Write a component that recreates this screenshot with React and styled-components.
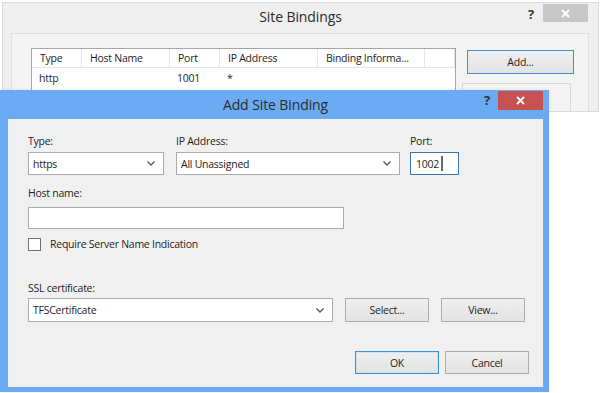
import React from 'react';
import styled, { createGlobalStyle } from 'styled-components';

const GlobalStyle = createGlobalStyle`
  html, body {
    margin: 0;
    padding: 0;
    background: #ffffff;
    font-family: "Open Sans", "Noto Sans", "Liberation Sans", sans-serif;
    font-size: 10.5px;
    letter-spacing: -0.25px;
    color: #1e1e1e;
  }
`;

const Desktop = styled.div`
  position: relative;
  width: 600px;
  height: 393px;
  overflow: hidden;
`;

/* ---------- background window: Site Bindings ---------- */

const BackWindow = styled.div`
  position: absolute;
  left: 2px;
  top: 2px;
  width: 597px;
  height: 110px;
  box-sizing: border-box;
  background: #efefef;
  border: 1px solid #dadada;
  overflow: hidden;
  display: flex;
  flex-direction: column;
`;

const TitleBar = styled.div`
  height: ${(p) => p.$height}px;
  flex: none;
  display: grid;
  grid-template-columns: 1fr auto 1fr;
  align-items: start;
`;

const Title = styled.div`
  grid-column: 2;
  font-size: 14px;
  letter-spacing: -0.1px;
  line-height: ${(p) => p.$line}px;
  color: #2b2b2b;
  white-space: nowrap;
`;

const Controls = styled.div`
  grid-column: 3;
  justify-self: end;
  display: flex;
  align-items: flex-start;
  gap: ${(p) => p.$gap}px;
  padding-right: ${(p) => p.$right}px;
  padding-top: ${(p) => p.$top}px;
`;

const Help = styled.span`
  font-weight: 700;
  font-size: 13px;
  line-height: ${(p) => p.$line}px;
  color: ${(p) => p.$color};
`;

const CloseBox = styled.div`
  width: 45px;
  height: ${(p) => p.$h}px;
  background: ${(p) => p.$bg};
  display: flex;
  align-items: center;
  justify-content: center;
`;

const BackBody = styled.div`
  flex: 1;
  padding: 0 0 0 8px;
`;

const Panel = styled.div`
  width: 578px;
  height: 100px;
  box-sizing: border-box;
  background: #f4f4f4;
  border: 1px solid #e0e0e0;
  padding: 14px 0 0 19px;
  display: flex;
  align-items: flex-start;
`;

const Table = styled.div`
  width: 425px;
  height: 80px;
  box-sizing: border-box;
  border: 1px solid #a5a5a5;
  background: #ffffff;
  flex: none;
`;

const TableRow = styled.div`
  display: grid;
  grid-template-columns: 50px 88px 50px 98px 107px 1fr;
  height: ${(p) => (p.$header ? 18 : 20)}px;
  border-bottom: ${(p) => (p.$header ? '1px solid #e5e5e5' : 'none')};
`;

const Cell = styled.div`
  padding-left: ${(p) => (p.$header ? 8 : 7)}px;
  line-height: ${(p) => (p.$header ? 18 : 21)}px;
  border-right: ${(p) => (p.$header ? '1px solid #e5e5e5' : 'none')};
  white-space: nowrap;
  overflow: hidden;
`;

const SideButtons = styled.div`
  display: flex;
  flex-direction: column;
  margin-left: 11px;
  padding-top: 2px;
`;

const Button = styled.button`
  width: ${(p) => p.$w || 84}px;
  height: ${(p) => p.$h || 24}px;
  box-sizing: border-box;
  margin: 0;
  padding: 0;
  font-family: inherit;
  font-size: 10.5px;
  letter-spacing: -0.25px;
  color: #1e1e1e;
  background: ${(p) => (p.$disabled ? '#f4f4f4' : 'linear-gradient(#efefef, #e3e3e3)')};
  border: 1px solid ${(p) => (p.$accent ? '#3c8fd8' : p.$disabled ? '#d9d9d9' : '#acacac')};
  box-shadow: ${(p) => (p.$soft ? 'inset 0 0 0 1px #cfe3f7' : 'none')};
  border-radius: 0;
`;

const GhostButton = styled(Button)`
  margin: 9px 0 0 -5px;
`;

/* ---------- foreground dialog: Add Site Binding ---------- */

const Dialog = styled.div`
  position: absolute;
  left: 0;
  top: 90px;
  width: 549px;
  height: 302px;
  box-sizing: border-box;
  background: #6aabf4;
  padding: 0 6px 5px 8px;
  display: flex;
  flex-direction: column;
  box-shadow: 0 0 3px rgba(0, 0, 0, 0.1);
`;

const Content = styled.div`
  flex: 1;
  background: #f0f0f0;
  padding: 15px 0 0 20px;
  display: flex;
  flex-direction: column;
`;

const TopRow = styled.div`
  display: grid;
  grid-template-columns: 136px 224px 49px;
  column-gap: 12px;
  & > :nth-child(3) {
    margin-left: -2px;
  }
`;

const Field = styled.div`
  display: flex;
  flex-direction: column;
`;

const Label = styled.label`
  line-height: 15px;
  height: 15px;
  margin-bottom: ${(p) => p.$gap ?? 3}px;
  color: #1e1e1e;
`;

const Combo = styled.div`
  width: ${(p) => p.$w}px;
  height: ${(p) => p.$h || 24}px;
  box-sizing: border-box;
  background: #ffffff;
  border: 1px solid #acacac;
  display: flex;
  align-items: center;
  justify-content: space-between;
  padding: 0 8px 0 4px;
`;

const TextBox = styled.div`
  width: ${(p) => p.$w}px;
  height: ${(p) => p.$h || 22}px;
  box-sizing: border-box;
  background: #ffffff;
  border: 1px solid ${(p) => (p.$focus ? '#3a79b0' : '#acacac')};
  display: flex;
  align-items: center;
  padding-left: 5px;
`;

const Caret = styled.span`
  display: inline-block;
  width: 2px;
  height: 15px;
  margin-left: 2px;
  background: #6a6a6a;
`;

const HostSection = styled.div`
  margin-top: 11px;
`;

const CheckRow = styled.div`
  display: flex;
  align-items: center;
  gap: 9px;
  margin-top: 8px;
`;

const CheckBox = styled.span`
  width: 13px;
  height: 13px;
  box-sizing: border-box;
  border: 1px solid #707070;
  background: #ffffff;
`;

const SslSection = styled.div`
  margin-top: 30px;
`;

const SslRow = styled.div`
  display: flex;
  align-items: center;
  gap: 12px;
`;

const Footer = styled.div`
  display: flex;
  justify-content: flex-end;
  gap: 6px;
  margin-top: 29px;
  padding-right: 14px;
`;

const Chevron = () => (
  <svg width="8" height="5" viewBox="0 0 8 5">
    <path d="M0.5 0.5 L4 4 L7.5 0.5" fill="none" stroke="#555" strokeWidth="1.3" />
  </svg>
);

const CloseGlyph = () => (
  <svg width="9" height="9" viewBox="0 0 9 9">
    <path d="M1 1 L8 8 M8 1 L1 8" stroke="#ffffff" strokeWidth="1.8" />
  </svg>
);

const columns = ['Type', 'Host Name', 'Port', 'IP Address', 'Binding Informa...', ''];
const rows = [['http', '', '1001', '*', '', '']];

export default function App() {
  return (
    <Desktop>
      <GlobalStyle />

      <BackWindow>
        <TitleBar $height={30}>
          <Title $line={28}>Site Bindings</Title>
          <Controls $gap={9} $right={10} $top={1}>
            <Help $line={20} $color="#3a3a3a">?</Help>
            <CloseBox $bg="#c7c7c7" $h={18}>
              <CloseGlyph />
            </CloseBox>
          </Controls>
        </TitleBar>
        <BackBody>
          <Panel>
            <Table>
              <TableRow $header>
                {columns.map((c, i) => (
                  <Cell $header key={i}>{c}</Cell>
                ))}
              </TableRow>
              {rows.map((r, i) => (
                <TableRow key={i}>
                  {r.map((c, j) => (
                    <Cell key={j}>{c}</Cell>
                  ))}
                </TableRow>
              ))}
            </Table>
            <SideButtons>
              <Button $w={107} $accent>Add...</Button>
              <GhostButton $w={109} $h={30} $disabled />
            </SideButtons>
          </Panel>
        </BackBody>
      </BackWindow>

      <Dialog>
        <TitleBar $height={29}>
          <Title $line={29}>Add Site Binding</Title>
          <Controls $gap={8} $right={0} $top={1}>
            <Help $line={19} $color="#333">?</Help>
            <CloseBox $bg="#c75050" $h={19}>
              <CloseGlyph />
            </CloseBox>
          </Controls>
        </TitleBar>
        <Content>
          <TopRow>
            <Field>
              <Label>Type:</Label>
              <Combo $w={136} $h={23}>
                <span>https</span>
                <Chevron />
              </Combo>
            </Field>
            <Field>
              <Label>IP Address:</Label>
              <Combo $w={224} $h={23}>
                <span>All Unassigned</span>
                <Chevron />
              </Combo>
            </Field>
            <Field>
              <Label>Port:</Label>
              <TextBox $w={49} $h={23} $focus>
                1002<Caret />
              </TextBox>
            </Field>
          </TopRow>

          <HostSection>
            <Field>
              <Label $gap={6}>Host name:</Label>
              <TextBox $w={316} $h={22} />
            </Field>
            <CheckRow>
              <CheckBox />
              <span>Require Server Name Indication</span>
            </CheckRow>
          </HostSection>

          <SslSection>
            <Field>
              <Label $gap={2}>SSL certificate:</Label>
              <SslRow>
                <Combo $w={305} $h={24}>
                  <span>TFSCertificate</span>
                  <Chevron />
                </Combo>
                <Button>Select...</Button>
                <Button>View...</Button>
              </SslRow>
            </Field>
          </SslSection>

          <Footer>
            <Button $h={23} $accent $soft>OK</Button>
            <Button $h={23}>Cancel</Button>
          </Footer>
        </Content>
      </Dialog>
    </Desktop>
  );
}
